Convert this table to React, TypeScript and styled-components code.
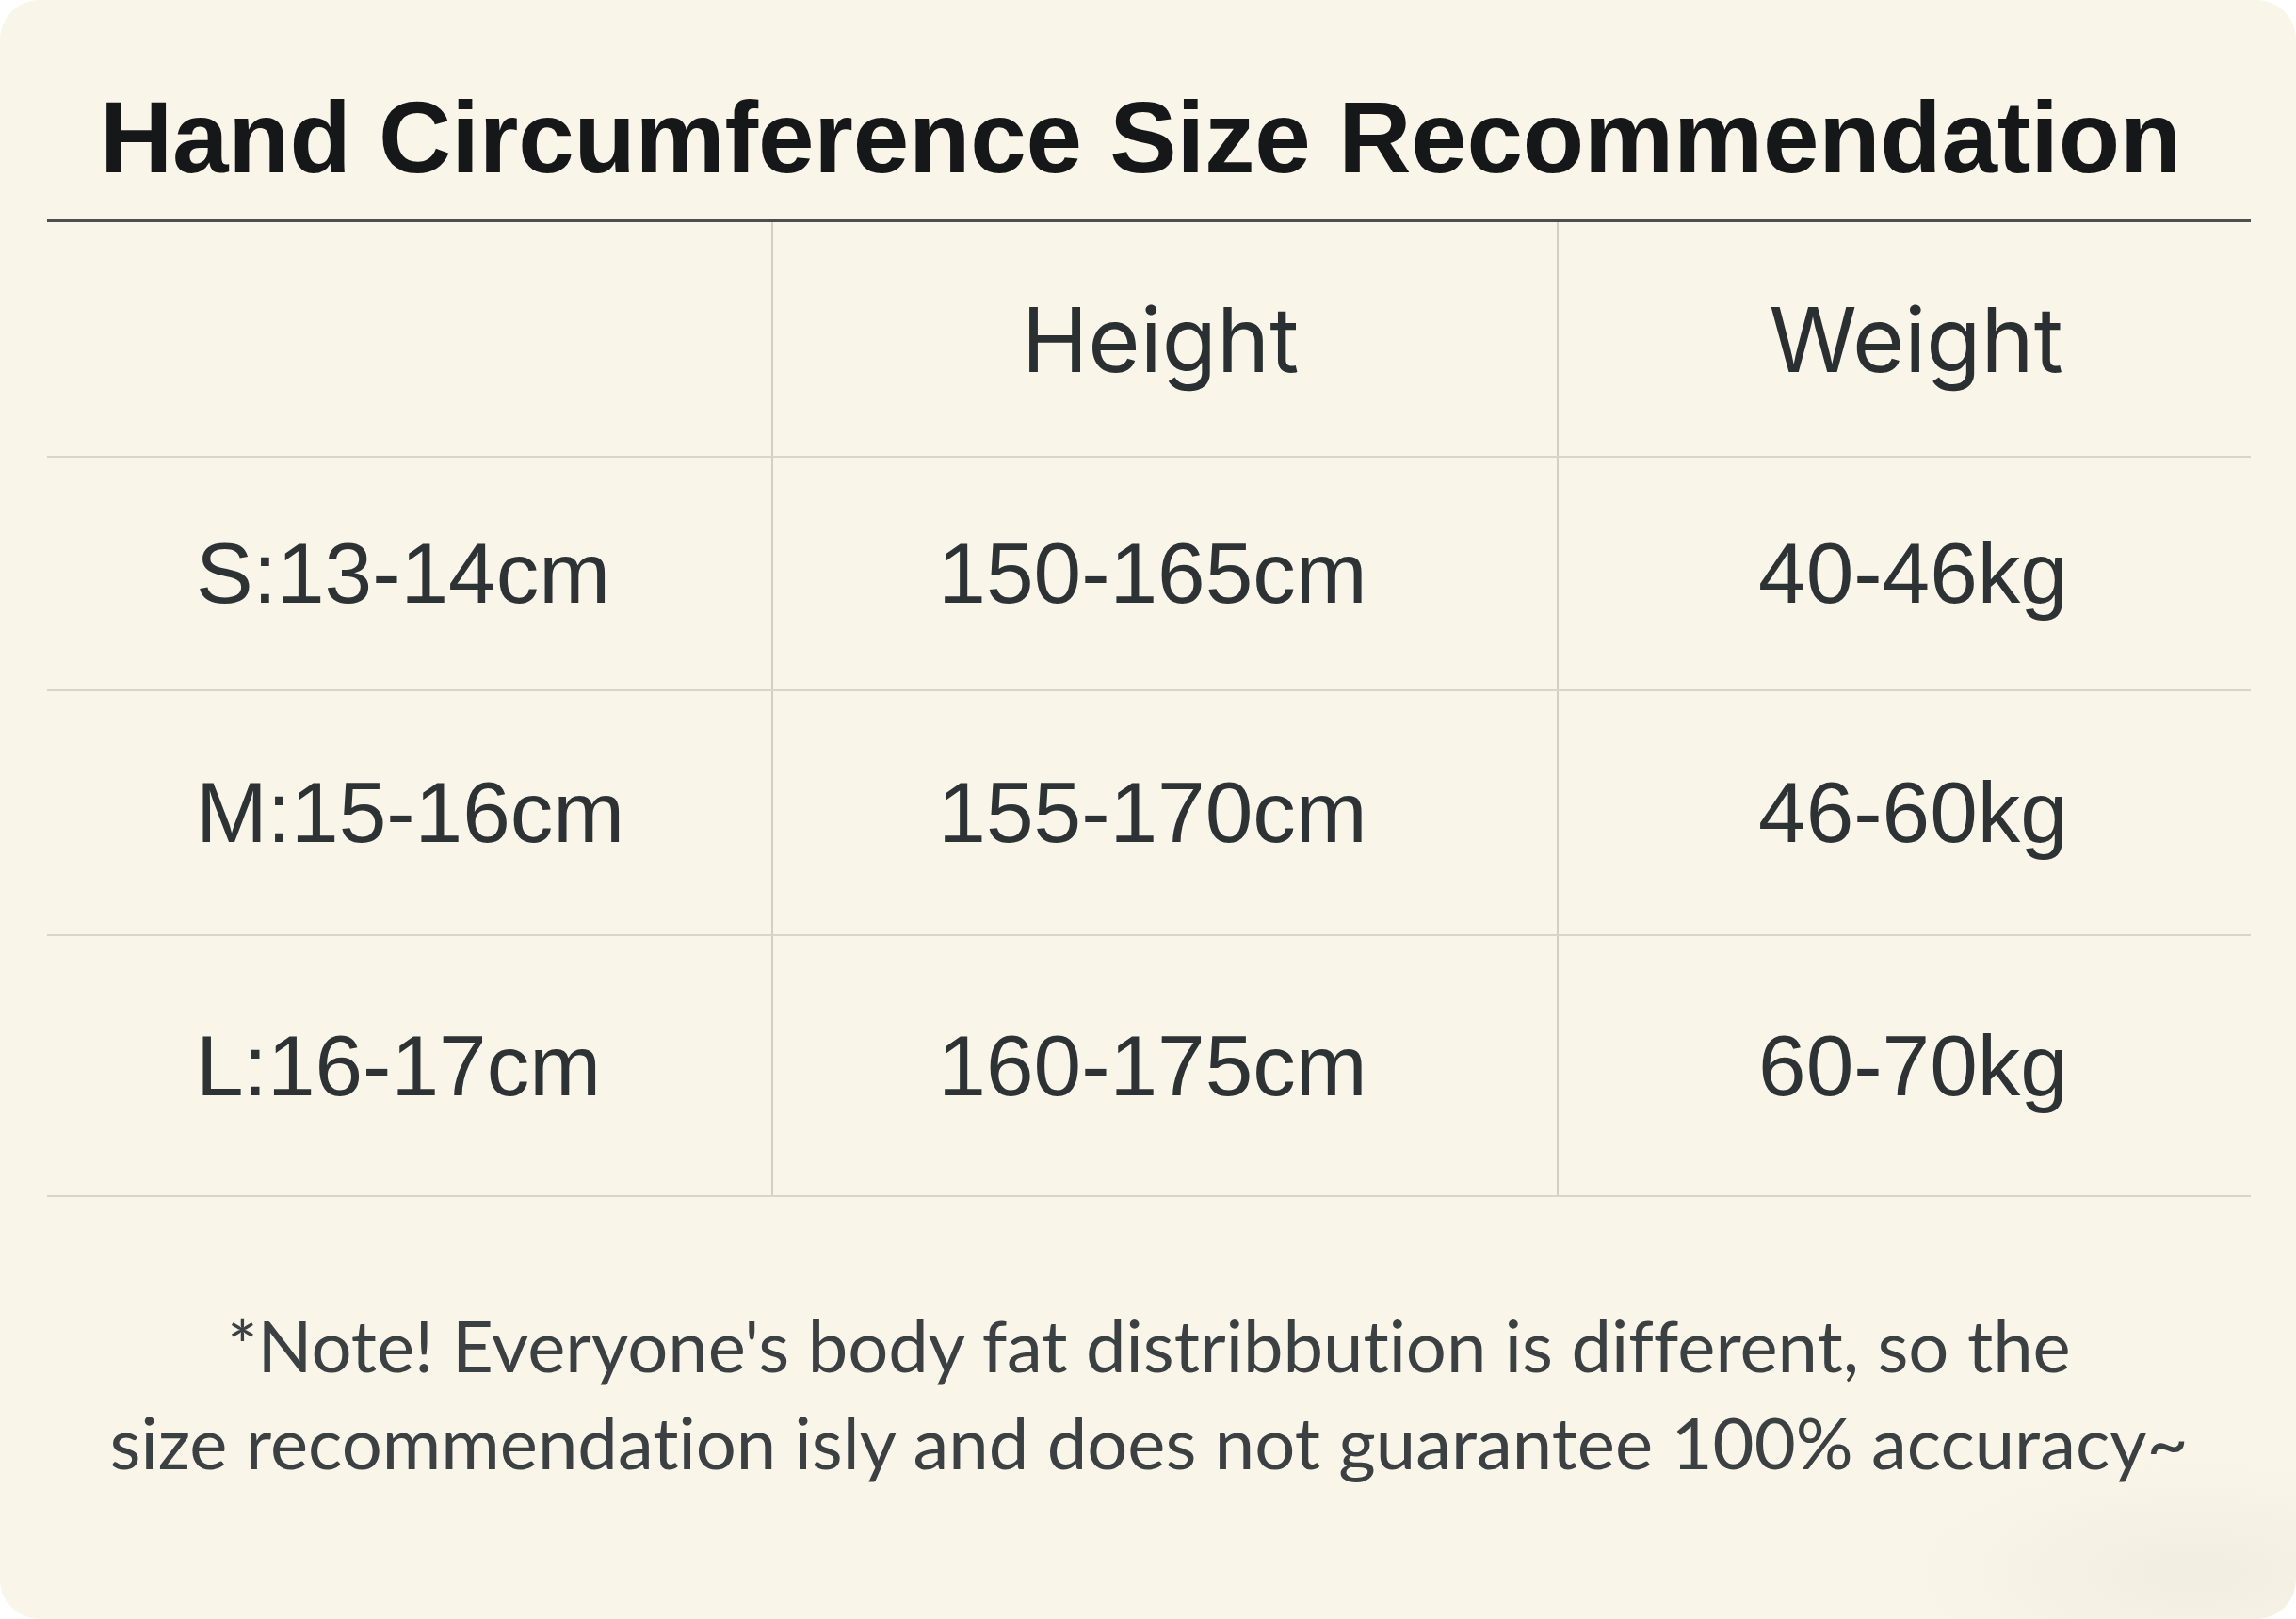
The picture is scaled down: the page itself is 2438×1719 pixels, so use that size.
import React from 'react';
import styled, { createGlobalStyle } from 'styled-components';

const GlobalStyle = createGlobalStyle`
  html, body {
    margin: 0;
    padding: 0;
    background: #ffffff;
  }
`;

const Card = styled.div`
  box-sizing: border-box;
  width: 2438px;
  height: 1719px;
  border-radius: 42px;
  background: radial-gradient(ellipse 300px 120px at 2330px 1670px, rgba(120, 110, 95, 0.06), rgba(0, 0, 0, 0)), #f9f5e9;
  padding: 93px 48px 0 50px;
  display: flex;
  flex-direction: column;
  overflow: hidden;
`;

const Title = styled.h1`
  margin: 0 0 32px 0;
  padding-right: 18px;
  font-family: "Liberation Sans", Arial, sans-serif;
  font-weight: 700;
  font-size: 107px;
  line-height: 1;
  color: #151718;
  text-align: center;
  letter-spacing: -0.2px;
`;

const Table = styled.div`
  width: 2340px;
  border-top: 4px solid #4b4f50;
`;

const Row = styled.div<{ $height: number }>`
  display: grid;
  grid-template-columns: 769px 834px 737px;
  height: ${(p) => p.$height}px;
  border-bottom: 2px solid #d9d5cb;
  box-sizing: border-box;
`;

const Cell = styled.div<{ $col: 0 | 1 | 2 }>`
  display: flex;
  align-items: center;
  justify-content: ${(p) => (p.$col === 0 ? 'flex-start' : 'center')};
  padding: ${(p) => (p.$col === 0 ? '0 0 0 158px' : p.$col === 1 ? '0 26px 0 0' : '0 0 0 18px')};
  border-left: ${(p) => (p.$col === 0 ? 'none' : '2px solid #d3cfc5')};
  font-family: "Liberation Sans", Arial, sans-serif;
  font-size: 91px;
  color: #2d3234;
`;

const HeadCell = styled(Cell)`
  padding: ${(p) => (p.$col === 2 ? '0 0 0 24px' : p.$col === 1 ? '0 10px 0 0' : '0')};
  font-family: Inter, Roboto, "Liberation Sans", sans-serif;
  font-weight: 400;
  font-size: 95px;
  color: #2a2f31;
`;

const Note = styled.p`
  margin: 105px 0 0 0;
  font-family: Lato, "Open Sans", sans-serif;
  font-size: 76px;
  line-height: 103px;
  color: #3b4043;
  text-align: center;
  font-variant-ligatures: none;
  font-feature-settings: "liga" 0;
`;

const rows = [
  { size: 'S:13-14cm', height: '150-165cm', weight: '40-46kg', h: 248 },
  { size: 'M:15-16cm', height: '155-170cm', weight: '46-60kg', h: 260 },
  { size: 'L:16-17cm', height: '160-175cm', weight: '60-70kg', h: 277 },
];

export default function App() {
  return (
    <>
      <GlobalStyle />
      <Card>
        <Title>Hand Circumference Size Recommendation</Title>
        <Table>
          <Row $height={250}>
            <HeadCell $col={0} />
            <HeadCell $col={1}>Height</HeadCell>
            <HeadCell $col={2}>Weight</HeadCell>
          </Row>
          {rows.map((r) => (
            <Row key={r.size} $height={r.h}>
              <Cell $col={0}>{r.size}</Cell>
              <Cell $col={1}>{r.height}</Cell>
              <Cell $col={2}>{r.weight}</Cell>
            </Row>
          ))}
        </Table>
        <Note>
          *Note! Everyone's body fat distribbution is different, so the
          <br />
          size recommendation isly and does not guarantee 100% accuracy~
        </Note>
      </Card>
    </>
  );
}
